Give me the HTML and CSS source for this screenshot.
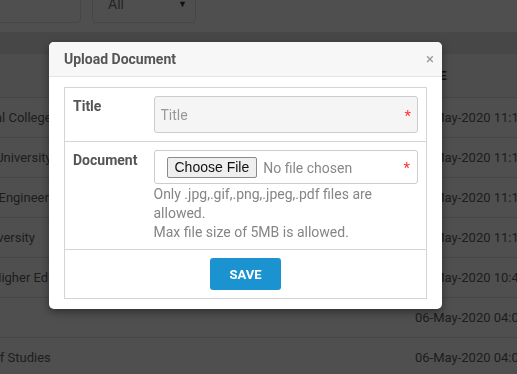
FILE: index.html
```html
<!DOCTYPE html>
<html lang="en">
<head>
  <meta charset="UTF-8">
  <meta name="viewport" content="width=device-width, initial-scale=1.0">
  <title>Documents</title>
  <link rel="stylesheet" href="styles.css">
</head>
<body>

  <div class="page">
    <div class="filters">
      <div class="field"></div>
      <div class="select">All <span class="caret">&#9660;</span></div>
    </div>
    <div class="band"></div>

    <table class="list">
      <thead>
        <tr>
          <th class="col-title">TITLE</th>
          <th class="col-date">DATE</th>
        </tr>
      </thead>
      <tbody>
        <tr><td>Regional College</td><td>06-May-2020 11:15 AM</td></tr>
        <tr><td>Global University</td><td>06-May-2020 11:14 AM</td></tr>
        <tr><td>Inst. of Engineering</td><td>06-May-2020 11:12 AM</td></tr>
        <tr><td>MG University</td><td>06-May-2020 11:10 AM</td></tr>
        <tr><td>Dir. of Higher Education</td><td>06-May-2020 10:42 AM</td></tr>
        <tr><td></td><td>06-May-2020 04:08 PM</td></tr>
        <tr><td>Board of Studies</td><td>06-May-2020 04:02 PM</td></tr>
      </tbody>
    </table>
  </div>

  <div class="backdrop"></div>

  <div class="modal">
    <div class="modal-head">
      <h4>Upload Document</h4>
      <span class="close">&times;</span>
    </div>
    <div class="modal-body">
      <table class="form">
        <tr>
          <th>Title</th>
          <td>
            <div class="req">
              <input type="text" class="text-input" placeholder="Title">
              <span class="star">*</span>
            </div>
          </td>
        </tr>
        <tr>
          <th>Document</th>
          <td>
            <div class="req file-box">
              <input type="file" class="file-input">
              <span class="star">*</span>
            </div>
            <p class="hint">Only .jpg,.gif,.png,.jpeg,.pdf files are allowed.<br>Max file size of 5MB is allowed.</p>
          </td>
        </tr>
        <tr>
          <td colspan="2" class="actions">
            <button class="btn-save">SAVE</button>
          </td>
        </tr>
      </table>
    </div>
  </div>

</body>
</html>
```

FILE: styles.css
```css
* {
  margin: 0;
  padding: 0;
  box-sizing: border-box;
}

body {
  font-family: Roboto, Arial, sans-serif;
  font-size: 14px;
  color: #5f5f5f;
  background: #fff;
  overflow: hidden;
  height: 100vh;
}

/* page behind the dialog, scrolled a little */
.page {
  margin: -12px 0 0 -45px;
}

.filters {
  display: flex;
  gap: 11px;
  padding-bottom: 9px;
}

.field {
  width: 126px;
  height: 35px;
  border: 1px solid #ddd;
  border-radius: 4px;
}

.select {
  width: 104px;
  height: 35px;
  border: 1px solid #ddd;
  border-radius: 4px;
  padding: 0 8px 0 15px;
  line-height: 30px;
  font-size: 14px;
  color: #777;
  display: flex;
  justify-content: space-between;
}

.caret {
  font-size: 9px;
  color: #333;
}

.band {
  height: 22px;
  background: #e6e6e6;
}

.list {
  border-collapse: collapse;
  table-layout: fixed;
  width: 700px;
}

.list th {
  height: 43px;
  text-align: left;
  font-size: 13px;
  font-weight: 700;
  color: #444;
  background: #f7f7f7;
  border-bottom: 1px solid #ddd;
}

.col-title { width: 460px; }
.col-date { width: 240px; }

.list td {
  height: 40px;
  font-size: 13px;
  white-space: nowrap;
  overflow: hidden;
  border-bottom: 1px solid #e2e2e2;
}

.backdrop {
  position: fixed;
  inset: 0;
  background: rgba(0, 0, 0, 0.69);
}

/* dialog */
.modal {
  position: absolute;
  top: 42px;
  left: 49px;
  width: 393px;
  background: #fff;
  border-radius: 5px;
  box-shadow: 0 3px 9px rgba(0, 0, 0, 0.4);
}

.modal-head {
  height: 35px;
  padding: 0 8px 0 15px;
  background: #f7f7f7;
  border-bottom: 1px solid #e5e5e5;
  border-radius: 5px 5px 0 0;
  display: flex;
  justify-content: space-between;
  align-items: center;
}

.modal-head h4 {
  font-size: 14px;
  font-weight: 700;
  color: #555;
}

.close {
  font-size: 15px;
  color: #999;
  cursor: pointer;
}

.modal-body {
  padding: 10px 15px 10px;
}

.form {
  width: 100%;
  table-layout: fixed;
  border-collapse: collapse;
  border: 1px solid #d5d5d5;
}

.form tr {
  border-bottom: 1px solid #d5d5d5;
}

.form th,
.form td {
  padding: 8px;
  vertical-align: top;
  text-align: left;
}

.form th {
  width: 81px;
  font-size: 14px;
  font-weight: 700;
  color: #555;
  line-height: 20px;
}

.req {
  position: relative;
}

.text-input {
  width: 100%;
  height: 37px;
  padding: 0 6px;
  border: 1px solid #ccc;
  border-radius: 3px;
  background: #f5f5f5;
  font-family: Roboto, Arial, sans-serif;
  font-size: 14px;
  color: #555;
}

.text-input::placeholder {
  color: #999;
}

.file-box {
  height: 34px;
  padding: 0 12px;
  border: 1px solid #ccc;
  border-radius: 3px;
  display: flex;
  align-items: center;
}

.file-input {
  width: 100%;
  min-width: 0;
  font-family: Roboto, Arial, sans-serif;
  font-size: 14px;
  color: #888;
}

.file-input::file-selector-button {
  font-family: "Liberation Sans", Arial, sans-serif;
  font-size: 14px;
  color: #111;
  height: 21px;
  padding: 0 7px;
  margin-right: 6px;
  border: 1px solid #8a8a8a;
  border-radius: 2px;
  background: #efefef;
}

.star {
  position: absolute;
  right: 7px;
  top: 50%;
  transform: translateY(-40%);
  color: #f33;
  font-size: 15px;
  line-height: 1;
}

.hint {
  margin-top: 1px;
  font-size: 14px;
  line-height: 18.8px;
  color: #858585;
}

.form td.actions {
  text-align: center;
}

.btn-save {
  width: 71px;
  height: 32px;
  border: none;
  border-radius: 3px;
  background: #1b93d1;
  color: #fff;
  font-family: Roboto, Arial, sans-serif;
  font-size: 13px;
  font-weight: 700;
  cursor: pointer;
}
```
